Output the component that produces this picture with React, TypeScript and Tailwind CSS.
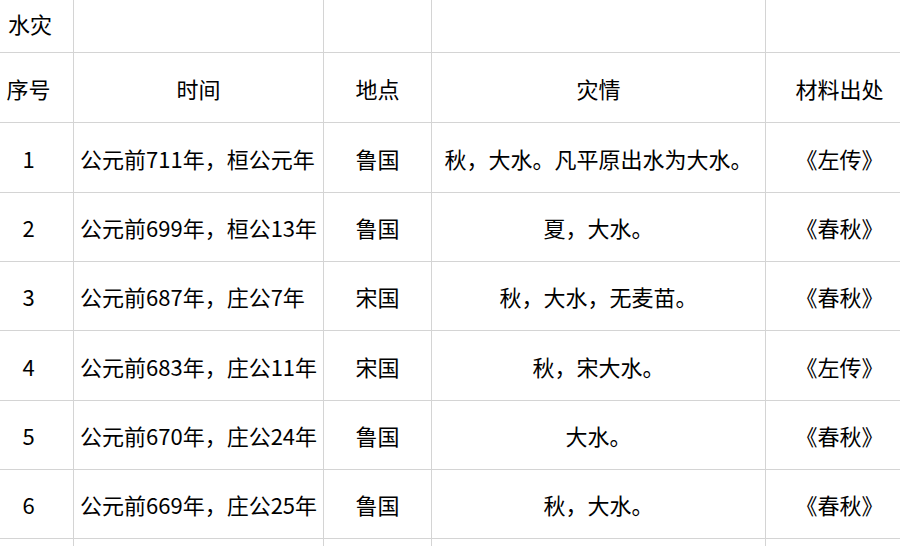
import React from "react";

type Row = { no: string; time: string; place: string; detail: string; source: string };

const rows: Row[] = [
  { no: "1", time: "公元前711年，桓公元年", place: "鲁国", detail: "秋，大水。凡平原出水为大水。", source: "《左传》" },
  { no: "2", time: "公元前699年，桓公13年", place: "鲁国", detail: "夏，大水。", source: "《春秋》" },
  { no: "3", time: "公元前687年，庄公7年", place: "宋国", detail: "秋，大水，无麦苗。", source: "《春秋》" },
  { no: "4", time: "公元前683年，庄公11年", place: "宋国", detail: "秋，宋大水。", source: "《左传》" },
  { no: "5", time: "公元前670年，庄公24年", place: "鲁国", detail: "大水。", source: "《春秋》" },
  { no: "6", time: "公元前669年，庄公25年", place: "鲁国", detail: "秋，大水。", source: "《春秋》" },
];

const heights = ["h-[70px]", "h-[69px]", "h-[69px]", "h-[70px]", "h-[69px]", "h-[69px]"];

const cell = "border-r border-b border-[#d4d4d4] flex items-center whitespace-nowrap";

export default function App() {
  return (
    <div
      className="w-[900px] h-[546px] overflow-hidden bg-white text-[22px] leading-none text-black"
      style={{ fontFamily: '"Noto Sans CJK SC", "Noto Sans", sans-serif' }}
    >
      <div className="grid w-[914px] grid-cols-[74px_250px_108px_334px_148px]">
        {/* title row */}
        <div className={`${cell} h-[53px] pl-[8px] pb-[6px]`}>水灾</div>
        <div className={`${cell} h-[53px]`} />
        <div className={`${cell} h-[53px]`} />
        <div className={`${cell} h-[53px]`} />
        <div className={`${cell} h-[53px]`} />

        {/* header row */}
        <div className={`${cell} h-[70px] justify-center pr-[16px]`}>序号</div>
        <div className={`${cell} h-[70px] justify-center`}>时间</div>
        <div className={`${cell} h-[70px] justify-center`}>地点</div>
        <div className={`${cell} h-[70px] justify-center`}>灾情</div>
        <div className={`${cell} h-[70px] justify-center`}>材料出处</div>

        {rows.map((r, i) => (
          <React.Fragment key={r.no}>
            <div className={`${cell} ${heights[i]} justify-center pr-[16px]`}>{r.no}</div>
            <div className={`${cell} ${heights[i]} pl-[6px]`}>{r.time}</div>
            <div className={`${cell} ${heights[i]} justify-center`}>{r.place}</div>
            <div className={`${cell} ${heights[i]} justify-center`}>{r.detail}</div>
            <div className={`${cell} ${heights[i]} justify-center`}>{r.source}</div>
          </React.Fragment>
        ))}

        {/* partial next row */}
        <div className={`${cell} h-[40px]`} />
        <div className={`${cell} h-[40px]`} />
        <div className={`${cell} h-[40px]`} />
        <div className={`${cell} h-[40px]`} />
        <div className={`${cell} h-[40px]`} />
      </div>
    </div>
  );
}
